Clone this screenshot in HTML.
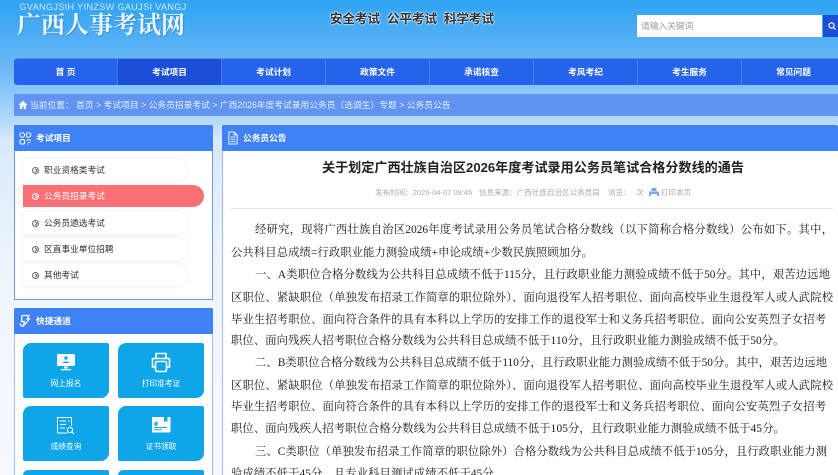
<!DOCTYPE html>
<html lang="zh-CN"><head><meta charset="utf-8"><title>广西人事考试网</title>
<style>
*{margin:0;padding:0;box-sizing:border-box}
html,body{width:838px;height:475px;overflow:hidden}
body{font-family:"Liberation Sans","Noto Sans CJK SC",sans-serif}
#r{position:relative;width:838px;height:475px;overflow:hidden;filter:blur(.3px);background:linear-gradient(180deg,#2ea3f2 0,#6fb9f5 70px,#b4d9fb 120px,#d8e9fe 140px,#eef5ff 260px,#f6f9ff 475px)}
.a{position:absolute;white-space:nowrap}
.nav{left:14px;top:59px;width:824px;height:26px;background:#2563eb;border-radius:3px 0 0 3px;display:flex;box-shadow:0 -1px 0 #4f8df0;overflow:hidden}
.nav div{flex:0 0 104px;height:26px;line-height:26px;text-align:center;color:#fff;font-size:8.7px;font-weight:700;border-right:1px solid #3f7cf0}
.nav .on{background:#1d4ed8}
.bc{left:14px;top:94px;width:824px;height:22px;background:#6094f0;color:#e6efff;font-size:8.75px;line-height:22px;padding-left:16px}
.ph{background:#3f82f6;color:#fff;font-weight:700;font-size:8.7px;line-height:26px;border-radius:2px 2px 0 0}
.pill{left:23px;width:165px;height:22px;background:#fff;border-radius:0 11px 11px 0;box-shadow:0 0 5px rgba(0,0,0,.09);font-size:8.7px;line-height:22px;padding-left:21px;color:#333}
.pill i{position:absolute;left:9px;top:7.5px;width:7px;height:7px;border:.8px solid #666;border-radius:50%}
.pill i:after{content:"";position:absolute;left:.8px;top:1.6px;width:2px;height:2px;border-top:.7px solid #666;border-right:.7px solid #666;transform:rotate(45deg)}
.pill.on{width:181px;background:#fb7075;color:#fff;box-shadow:none}
.pill.on i,.pill.on i:after{border-color:#fff}
.tile{width:86px;height:55px;background:#0ea5e9;border-radius:8px 2px 8px 2px;color:#fff;font-size:7.7px;text-align:center;overflow:hidden}
.tile span{position:absolute;left:0;right:0;top:35px;line-height:12px}
.tile svg{position:absolute;left:33px;top:10px}
.l{left:231px;height:22px;font-family:"Liberation Serif","Noto Serif CJK SC",serif;font-size:11.3px;line-height:22px;color:#1a1a1a;text-align:justify;text-align-last:justify;white-space:normal;overflow:hidden}
.e{text-align:left;text-align-last:left;white-space:nowrap;letter-spacing:.12px}
</style></head><body><div id="r">
<div class="a" style="left:19.5px;top:1px;font-size:9px;line-height:12px;letter-spacing:.4px;color:#cfe8fd">GVANGJSIH YINZSW GAUJSI VANGJ</div>
<div class="a" style="left:17px;top:12px;font-family:'Liberation Serif','Noto Serif CJK SC',serif;font-weight:700;font-size:24px;line-height:28px;color:#eaf5fe;text-shadow:1px 1px 1px rgba(60,110,170,.45)">广西人事考试网</div>
<div class="a" style="left:330px;top:11px;font-size:12.5px;line-height:16px;font-weight:700;color:#333;text-shadow:0 0 2px #fff,0 0 2px #fff">安全考试</div>
<div class="a" style="left:387px;top:11px;font-size:12.5px;line-height:16px;font-weight:700;color:#333;text-shadow:0 0 2px #fff,0 0 2px #fff">公平考试</div>
<div class="a" style="left:444px;top:11px;font-size:12.5px;line-height:16px;font-weight:700;color:#333;text-shadow:0 0 2px #fff,0 0 2px #fff">科学考试</div>
<div class="a" style="left:637px;top:15px;width:185px;height:22px;background:#fff;color:#999;font-size:8.7px;line-height:22px;padding-left:4px">请输入关键词</div>
<div class="a" style="left:823px;top:15px;width:15px;height:22px;background:#1d4ed8"><svg width="15" height="22" style="position:absolute;left:0;top:0"><circle cx="8.5" cy="10.500" r="2.600" fill="none" stroke="#fff" stroke-width="1.200"/><path d="M10.500 12.500l2 2" stroke="#fff" stroke-width="1.200"/></svg></div>
<div class="a nav"><div>首 页</div><div class="on">考试项目</div><div>考试计划</div><div>政策文件</div><div>承诺核查</div><div>考风考纪</div><div>考生服务</div><div>常见问题</div></div>
<div class="a bc">当前位置： 首页 &gt; 考试项目 &gt; 公务员招录考试 &gt; 广西2026年度考试录用公务员（选调生）专题 &gt; 公务员公告</div>
<svg class="a" style="left:18px;top:100px" width="10" height="10"><path d="M5 .8L.5 5H2v4h2.200V6.400h1.600V9H8V5h1.500z" fill="#fff"/></svg>

<div class="a" style="left:14px;top:125px;width:199px;height:175px;background:#fff;border:1px solid #6f97e8;border-top:0"></div>
<div class="a ph" style="left:14px;top:125px;width:199px;padding-left:22px">考试项目</div>
<svg class="a" style="left:19px;top:132px" width="13" height="13" fill="none" stroke="#fff" stroke-width="1"><circle cx="3.200" cy="3" r="2.300"/><circle cx="9.500" cy="3" r="2.300"/><rect x="1" y="7.600" width="4.600" height="4.400" rx="1.500"/><path d="M7.500 8h4.500M9.500 10.500h2M8 12h1"/></svg>
<div class="a pill" style="top:159px"><i></i>职业资格类考试</div>
<div class="a pill on" style="top:185px"><i></i>公务员招录考试</div>
<div class="a pill" style="top:212px"><i></i>公务员遴选考试</div>
<div class="a pill" style="top:238px"><i></i>区直事业单位招聘</div>
<div class="a pill" style="top:264px"><i></i>其他考试</div>

<div class="a" style="left:14px;top:308px;width:199px;height:167px;background:#fff;border-left:1px solid #9dbcf5;border-right:1px solid #9dbcf5"></div>
<div class="a ph" style="left:14px;top:308px;width:199px;padding-left:22px">快捷通道</div>
<svg class="a" style="left:19px;top:314px" width="12" height="14" fill="none" stroke="#fff" stroke-width="1.200"><path d="M3 1.500h7L8 5h2.500L4 12.500 5.500 7.500H2.500z"/><path d="M1 9.500c.5 1.500 1.500 2.500 2.500 3"/></svg>

<div class="a tile" style="left:23px;top:343px"><svg width="20" height="19"><rect x="1" y="1" width="18" height="12" rx="1.500" fill="#fff"/><circle cx="10" cy="5" r="1.800" fill="#0ea5e9"/><path d="M6.500 10c.5-2 6.500-2 7 0z" fill="#0ea5e9"/><path d="M8 13.500h4v2H8zM5 16h10v1.200H5z" fill="#fff"/></svg><span>网上报名</span></div>
<div class="a tile" style="left:118px;top:343px"><svg width="20" height="21" fill="none" stroke="#fff" stroke-width="1.600" style="left:33px;top:9px"><path d="M5 6V1.500h10V6M5 15H1.500V6.500h17V15H15"/><rect x="4.500" y="9.500" width="11" height="10" rx="1.500"/></svg><span>打印准考证</span></div>
<div class="a tile" style="left:23px;top:406px"><svg width="19" height="19" fill="none" stroke="#fff" stroke-width="1"><path d="M15.500 10V1.500H1.500v15.500h10"/><path d="M4 5h6M4 8.500h6M4 12h5M12.500 4.500l1 1"/><circle cx="14" cy="14" r="2.600"/><path d="M16 16l2 2"/></svg><span>成绩查询</span></div>
<div class="a tile" style="left:118px;top:406px"><svg width="20" height="17"><path d="M1 1h12v5l2-1 1.500 1V1H19.500v14.500a1 1 0 0 1-1 1H1z" fill="#fff"/><path d="M5 4.500l.8 1.700 1.800.2-1.300 1.200.4 1.800L5 9.500l-1.700.9.400-1.800L2.400 7.400l1.800-.2z" fill="#0ea5e9"/><path d="M3 11.500h13M3 13.800h8" stroke="#0ea5e9"/></svg><span>证书领取</span></div>
<div class="a tile" style="left:23px;top:470px;height:5px;border-radius:5px 2px 0 0"></div>
<div class="a tile" style="left:118px;top:470px;height:5px;border-radius:5px 2px 0 0"></div>

<div class="a" style="left:222px;top:125px;width:616px;height:350px;background:#fff;border-left:1px solid #9dbcf5"></div>
<div class="a ph" style="left:222px;top:125px;width:616px;padding-left:21px">公务员公告</div>
<svg class="a" style="left:228px;top:131px" width="10" height="14" fill="none" stroke="#eaf2ff" stroke-width="1"><path d="M.8 1h5.400L9.200 4v9H.8zM6 1v3h3M2.500 6h5M2.500 8.300h5M2.500 10.600h5"/></svg>
<div class="a" style="left:322px;top:159px;font-size:13.1px;line-height:18px;font-weight:700;color:#222">关于划定广西壮族自治区2026年度考试录用公务员笔试合格分数线的通告</div>
<div class="a" style="left:375px;top:187px;font-size:7.55px;line-height:12px;color:#aaa">发布时间：2026-04-07 09:45</div>
<div class="a" style="left:479px;top:187px;font-size:7.55px;line-height:12px;color:#aaa">信息来源：广西壮族自治区公务员局</div>
<div class="a" style="left:608px;top:187px;font-size:7.55px;line-height:12px;color:#aaa">浏览：</div>
<div class="a" style="left:636px;top:187px;font-size:7.55px;line-height:12px;color:#aaa">次</div>
<svg class="a" style="left:649px;top:188px" width="10" height="9"><path d="M2.500 0h5v3h-5zM0 3.500h10V8H8V6H2v2H0z" fill="#7aa6ee"/></svg>
<div class="a" style="left:661px;top:187px;font-size:7.55px;line-height:12px;color:#aaa">打印本页</div>
<div class="a" style="left:231px;top:208px;width:602px;height:1px;background:#e8e8e8"></div>

<div class="a l" style="left:255px;top:219px;width:578px">经研究，现将广西壮族自治区2026年度考试录用公务员笔试合格分数线（以下简称合格分数线）公布如下。其中，</div>
<div class="a l e" style="top:242px">公共科目总成绩=行政职业能力测验成绩+申论成绩+少数民族照顾加分。</div>
<div class="a l" style="left:255px;top:264px;width:575px">一、A类职位合格分数线为公共科目总成绩不低于115分，且行政职业能力测验成绩不低于50分。其中，艰苦边远地</div>
<div class="a l" style="top:287px;width:602px">区职位、紧缺职位（单独发布招录工作简章的职位除外）、面向退役军人招考职位、面向高校毕业生退役军人或人武院校</div>
<div class="a l" style="top:309px;width:595px">毕业生招考职位、面向符合条件的具有本科以上学历的安排工作的退役军士和义务兵招考职位、面向公安英烈子女招考</div>
<div class="a l e" style="top:330px">职位、面向残疾人招考职位合格分数线为公共科目总成绩不低于110分，且行政职业能力测验成绩不低于50分。</div>
<div class="a l" style="left:255px;top:352px;width:572px">二、B类职位合格分数线为公共科目总成绩不低于110分，且行政职业能力测验成绩不低于50分。其中，艰苦边远地</div>
<div class="a l" style="top:375px;width:602px">区职位、紧缺职位（单独发布招录工作简章的职位除外）、面向退役军人招考职位、面向高校毕业生退役军人或人武院校</div>
<div class="a l" style="top:396px;width:595px">毕业生招考职位、面向符合条件的具有本科以上学历的安排工作的退役军士和义务兵招考职位、面向公安英烈子女招考</div>
<div class="a l e" style="top:418px">职位、面向残疾人招考职位合格分数线为公共科目总成绩不低于105分，且行政职业能力测验成绩不低于45分。</div>
<div class="a l" style="left:255px;top:441px;width:572px">三、C类职位（单独发布招录工作简章的职位除外）合格分数线为公共科目总成绩不低于105分，且行政职业能力测</div>
<div class="a l e" style="top:463px;height:12px">验成绩不低于45分，且专业科目测试成绩不低于45分。</div>
</div></body></html>
